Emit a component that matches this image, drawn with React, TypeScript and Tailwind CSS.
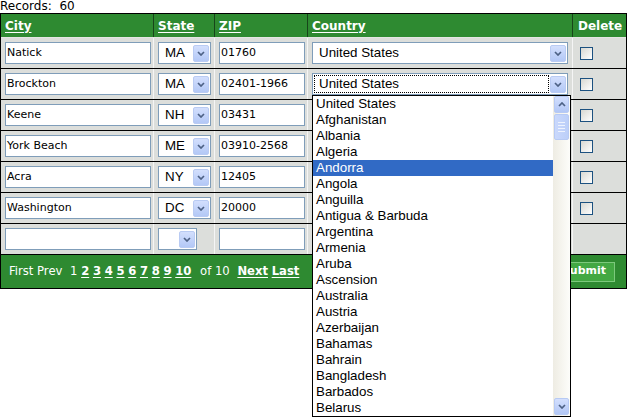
import React from "react";

type TRow = { city: string; state: string; zip: string; country: string };

// rows 3-6 sit under the open list, so their country text never shows
const rows: TRow[] = [
  { city: "Natick", state: "MA", zip: "01760", country: "United States" },
  { city: "Brockton", state: "MA", zip: "02401-1966", country: "United States" },
  { city: "Keene", state: "NH", zip: "03431", country: "" },
  { city: "York Beach", state: "ME", zip: "03910-2568", country: "" },
  { city: "Acra", state: "NY", zip: "12405", country: "" },
  { city: "Washington", state: "DC", zip: "20000", country: "" },
];

const countries = [
  "United States",
  "Afghanistan",
  "Albania",
  "Algeria",
  "Andorra",
  "Angola",
  "Anguilla",
  "Antigua & Barbuda",
  "Argentina",
  "Armenia",
  "Aruba",
  "Ascension",
  "Australia",
  "Austria",
  "Azerbaijan",
  "Bahamas",
  "Bahrain",
  "Bangladesh",
  "Barbados",
  "Belarus",
];

const XpButton = ({ dir }: { dir: "up" | "down" }) => (
  <div className="flex h-[17px] w-[15px] shrink-0 items-center justify-center rounded-[2px] border border-[#b7caf4] bg-linear-to-b from-[#d3dffd] to-[#b2c7f6]">
    <svg width="8" height="5" viewBox="0 0 8 5">
      <path
        d={dir === "down" ? "M1 1l3 3 3-3" : "M1 4l3-3 3 3"}
        fill="none"
        stroke="#4d6185"
        strokeWidth="1.7"
      />
    </svg>
  </div>
);

const DropArrow = () => (
  <div className="ml-[1px] mr-[1px] flex h-[17px] w-[16px] shrink-0 items-center justify-center rounded-[2px] border border-[#b9cbf3] bg-linear-to-b from-[#d3dffd] to-[#b3c8f6]">
    <svg width="8" height="5" viewBox="0 0 8 5">
      <path d="M1 1l3 3 3-3" fill="none" stroke="#4d6185" strokeWidth="1.7" />
    </svg>
  </div>
);

const TextBox = ({ value, w }: { value: string; w: string }) => (
  <div
    className={`${w} flex h-[22px] items-center border border-[#7f9db9] bg-white pl-[1px] font-['DejaVu_Sans',sans-serif] text-[11px] text-black`}
  >
    {value}
  </div>
);

const Select = ({
  value,
  w,
  focus,
  open,
}: {
  value: string;
  w: string;
  focus?: boolean;
  open?: boolean;
}) => (
  <div
    className={`${w} relative flex h-[22px] items-center border border-[#7f9db9] bg-white font-['Liberation_Sans',Arial,sans-serif] text-[13.33px] text-black`}
  >
    <div
      className={`ml-[1px] flex h-[18px] flex-1 items-center pl-[4px] border ${
        focus ? "border-dotted border-black" : "border-transparent"
      }`}
    >
      {value}
    </div>
    <DropArrow />
    {open && <CountryList />}
  </div>
);

const CountryList = () => (
  <div className="absolute left-[-1px] top-[21px] z-10 flex h-[322px] w-[259px] border border-black bg-white">
    <div className="flex-1">
      {countries.map((c) => (
        <div
          key={c}
          className={`flex h-[16px] items-center pl-[3px] leading-[16px] ${
            c === "Andorra" ? "bg-[#316ac5] text-white" : "text-black"
          }`}
        >
          {c}
        </div>
      ))}
    </div>
    <div className="flex w-[17px] flex-col items-center bg-linear-to-r from-[#eeece3] to-[#fdfdfa]">
      <XpButton dir="up" />
      <div className="mt-[1px] flex h-[26px] w-[15px] flex-col items-center justify-center gap-[2px] rounded-[2px] border border-[#b7caf4] bg-linear-to-r from-[#c9d8fc] to-[#bccff9]">
        <div className="h-[1px] w-[7px] bg-[#eef3fe]" />
        <div className="h-[1px] w-[7px] bg-[#eef3fe]" />
        <div className="h-[1px] w-[7px] bg-[#eef3fe]" />
        <div className="h-[1px] w-[7px] bg-[#eef3fe]" />
      </div>
      <div className="flex-1" />
      <div className="mb-[1px]">
        <XpButton dir="down" />
      </div>
    </div>
  </div>
);

const Checkbox = () => (
  <div className="h-[13px] w-[13px] border border-[#1c5180] bg-linear-to-br from-[#d8d8d2] to-white" />
);

const cell = "flex h-full items-center border-l border-[#f5f5f5]";

const DataRow = ({ row, idx }: { row: TRow; idx: number }) => (
  <div className="flex h-[31px] border-b border-black bg-[#dcdedb]">
    <div className="flex h-full w-[152px] items-center pl-[4px]">
      <TextBox value={row.city} w="w-[146px]" />
    </div>
    <div className={`${cell} w-[61px] pl-[4px]`}>
      <Select value={row.state} w="w-[53px]" />
    </div>
    <div className={`${cell} w-[93px] pl-[4px]`}>
      <TextBox value={row.zip} w="w-[86px]" />
    </div>
    <div className={`${cell} w-[265px] pl-[4px]`}>
      <Select value={row.country} w="w-[256px]" focus={idx === 1} open={idx === 1} />
    </div>
    <div className={`${cell} w-[54px] pl-[7px]`}>
      <Checkbox />
    </div>
  </div>
);

const HeadLink = ({ children }: { children: React.ReactNode }) => (
  <span className="underline underline-offset-2">{children}</span>
);

export default function App() {
  const pages = ["2", "3", "4", "5", "6", "7", "8", "9", "10"];

  return (
    <div className="h-[417px] w-[627px] bg-white">
      <div className="h-[13px] whitespace-pre font-['DejaVu_Sans',sans-serif] text-[12px] leading-[12px] text-black">
        {"Records:  60"}
      </div>
      <div className="relative w-[627px] border border-black">
        <div className="flex h-[24px] border-b border-[#e4e6e3] bg-[#2e8a31] font-['DejaVu_Sans',sans-serif] text-[12px] font-bold text-white">
          <div className="flex w-[152px] items-center pl-[4px]">
            <HeadLink>City</HeadLink>
          </div>
          <div className="flex w-[61px] items-center border-l border-[#17451a] pl-[4px]">
            <HeadLink>State</HeadLink>
          </div>
          <div className="flex w-[93px] items-center border-l border-[#17451a] pl-[4px]">
            <HeadLink>ZIP</HeadLink>
          </div>
          <div className="flex w-[265px] items-center border-l border-[#17451a] pl-[4px]">
            <HeadLink>Country</HeadLink>
          </div>
          <div className="flex w-[54px] items-center border-l border-[#17451a] pl-[5px]">
            Delete
          </div>
        </div>

        {rows.map((r, i) => (
          <DataRow key={r.city} row={r} idx={i} />
        ))}

        <div className="flex h-[31px] border-b border-black bg-[#dcdedb]">
          <div className="flex h-full w-[152px] items-center pl-[4px]">
            <TextBox value="" w="w-[146px]" />
          </div>
          <div className={`${cell} w-[61px] pl-[4px]`}>
            <Select value="" w="w-[39px]" />
          </div>
          <div className={`${cell} w-[93px] pl-[4px]`}>
            <TextBox value="" w="w-[86px]" />
          </div>
          <div className={`${cell} w-[265px]`} />
          <div className={`${cell} w-[54px]`} />
        </div>

        <div className="flex h-[33px] items-center justify-between bg-[#2e8a31] pl-[8px] pr-[11px] font-['DejaVu_Sans',sans-serif] text-[11.6px] text-white">
          <div className="flex items-center whitespace-pre">
            <span>First Prev </span>
            <span className="ml-[4px]">1 </span>
            {pages.map((p) => (
              <React.Fragment key={p}>
                <span className="font-bold underline underline-offset-2">{p}</span>
                <span> </span>
              </React.Fragment>
            ))}
            <span className="ml-[5px]">of 10 </span>
            <span className="ml-[4px] font-bold underline underline-offset-2">Next</span>
            <span> </span>
            <span className="font-bold underline underline-offset-2">Last</span>
          </div>
          <div className="flex h-[20px] items-center border border-[#7cc97c] bg-[#43a843] px-[8px] text-[11px] font-bold text-white">
            Submit
          </div>
        </div>
      </div>
    </div>
  );
}
